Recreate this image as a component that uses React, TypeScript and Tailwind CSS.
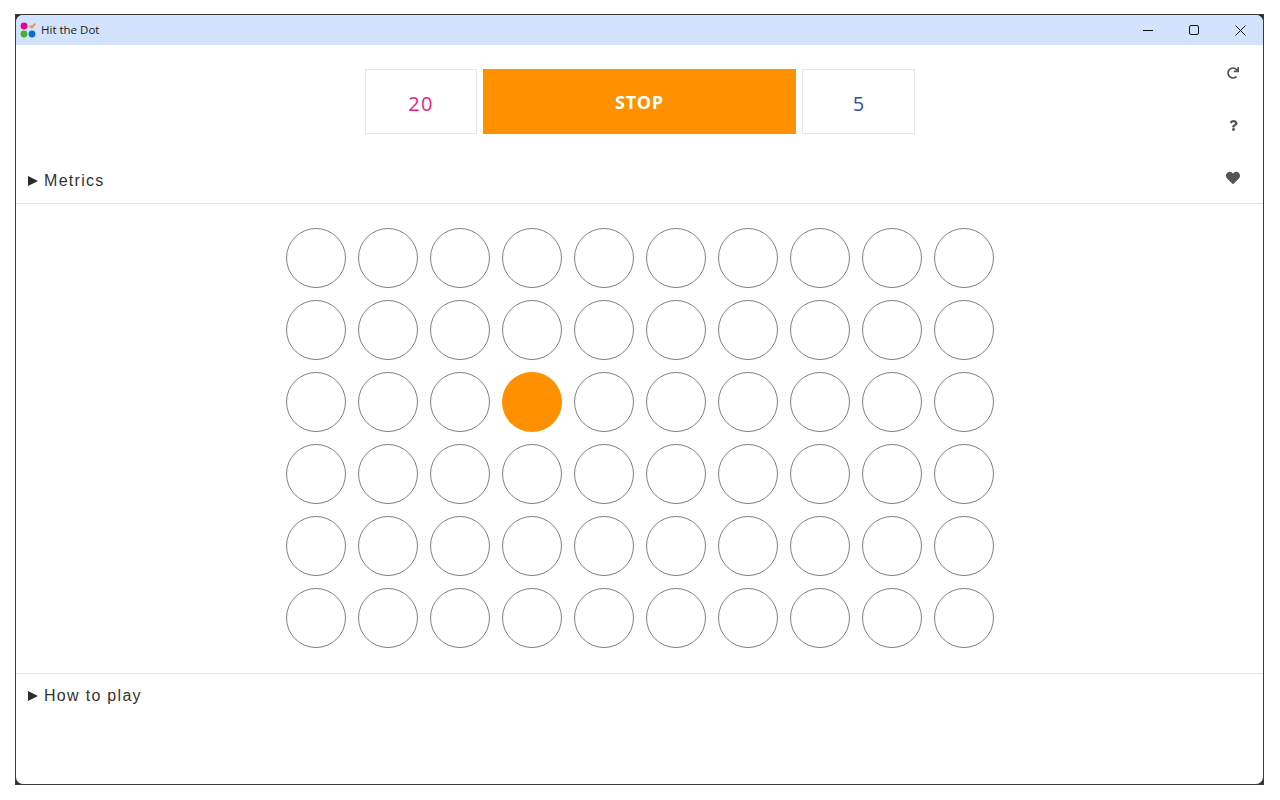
import React from "react";
import { FaHeart, FaQuestion, FaRedo } from "react-icons/fa";

const rows = 6;
const cols = 10;
const activeDot = { row: 2, col: 3 };

const Logo = () => (
  <svg width="16" height="16" viewBox="0 0 16 16">
    <circle cx="4" cy="4" r="3.4" fill="#ec008c" />
    <path d="M9.6 3.8l2.2 1.7 3.4-3.9" fill="none" stroke="#f7941d" strokeWidth="2" />
    <circle cx="4" cy="12" r="3.4" fill="#4caf2c" />
    <circle cx="12" cy="12" r="3.4" fill="#0b6cd6" />
  </svg>
);

const Disclosure: React.FC<{ label: string }> = ({ label }) => (
  <div className="flex items-center text-[16px] leading-[22px] tracking-[1.3px] text-[#333] font-['Liberation_Sans',sans-serif]">
    <svg width="10" height="10" viewBox="0 0 10 10" className="mr-[6px]">
      <path d="M0 0L10 5L0 10Z" fill="#2b2b2b" />
    </svg>
    <span>{label}</span>
  </div>
);

const App: React.FC = () => {
  return (
    <div className="h-[800px] w-[1280px] overflow-hidden bg-white pl-[15px] pt-[14px]">
      <div className="h-[771px] w-[1249px] overflow-hidden border border-[#3a3a3a] bg-[#2e2e2e]">
        <div className="flex h-full flex-col overflow-hidden rounded-[7px] bg-white">
          {/* title bar */}
          <div className="flex h-[30px] shrink-0 items-center bg-[#d3e3fd] pl-[4px]">
            <Logo />
            <span className="ml-[5px] text-[11.5px] text-[#1a1a1a] font-['Open_Sans',sans-serif]">Hit the Dot</span>
            <div className="ml-auto flex items-center text-black">
              <div className="flex w-[46px] justify-center">
                <svg width="10" height="10" viewBox="0 0 10 10"><path d="M0 5.5H10" stroke="#111" strokeWidth="1" /></svg>
              </div>
              <div className="flex w-[46px] justify-center">
                <svg width="10" height="10" viewBox="0 0 10 10"><rect x="0.5" y="0.5" width="9" height="9" rx="1.5" fill="none" stroke="#111" strokeWidth="1" /></svg>
              </div>
              <div className="flex w-[46px] justify-center">
                <svg width="11" height="11" viewBox="0 0 11 11"><path d="M0.5 0.5L10.5 10.5M10.5 0.5L0.5 10.5" stroke="#111" strokeWidth="1" /></svg>
              </div>
            </div>
          </div>

          {/* top panel */}
          <div className="flex h-[159px] shrink-0 border-b border-[#e4e4e4]">
            <div className="flex flex-1 flex-col pl-[13px]">
              <div className="ml-[336px] mt-[24px] flex h-[65px] w-[550px] gap-[6px] font-['Open_Sans',sans-serif]">
                <div className="flex w-[112px] items-center justify-center border border-[#e6e6e6] pt-[5px] text-[20px] font-medium tracking-[1.2px] text-[#e5257f]">20</div>
                <button className="flex w-[313px] items-center justify-center bg-[#ff9100] pt-[1px] text-[18px] font-bold tracking-[0.7px] text-white">STOP</button>
                <div className="flex w-[113px] items-center justify-center border border-[#e6e6e6] pt-[5px] text-[20px] font-medium text-[#2f4fa2]">5</div>
              </div>
              <div className="ml-[-1px] mt-[36px]">
                <Disclosure label="Metrics" />
              </div>
            </div>
            <div className="mr-[22px] mt-[22px] flex h-[118px] w-[16px] flex-col items-center justify-between text-[#555]">
              <FaRedo size={12} />
              <FaQuestion size={11} />
              <FaHeart size={14} />
            </div>
          </div>

          {/* dot board */}
          <div className="flex h-[470px] shrink-0 flex-col items-center gap-[12px] border-b border-[#e4e4e4] pt-[24px]">
            {Array.from({ length: rows }).map((_, row) => (
              <div key={row} className="flex gap-[12px]">
                {Array.from({ length: cols }).map((_, col) =>
                  row === activeDot.row && col === activeDot.col ? (
                    <div key={col} className="h-[60px] w-[60px] rounded-full bg-[#ff9100]" />
                  ) : (
                    <div key={col} className="h-[60px] w-[60px] rounded-full border border-[#808080]" />
                  )
                )}
              </div>
            ))}
          </div>

          <div className="pl-[12px] pt-[11px]">
            <Disclosure label="How to play" />
          </div>
        </div>
      </div>
    </div>
  );
};

export default App;
